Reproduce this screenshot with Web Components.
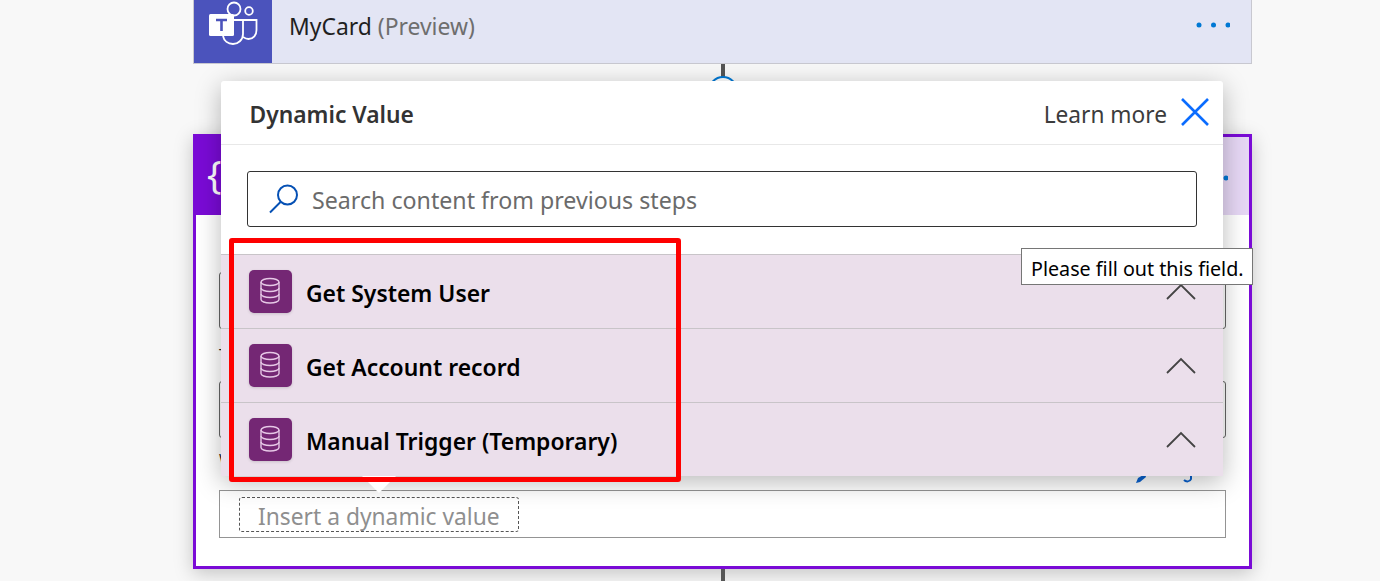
<!DOCTYPE html>
<html>
<head>
<meta charset="utf-8">
<title>MyCard</title>
<style>
html,body{ margin:0; height:581px; overflow:hidden; background:#f8f8f8; font-family:"Noto Sans","Open Sans",sans-serif; }
</style>
</head>
<body>
<flow-canvas>
  <teams-card title-text="MyCard" note="(Preview)"></teams-card>
  <flow-connector></flow-connector>
  <compose-card>
    <card-field label="T"></card-field>
    <card-field short></card-field>
    <value-field label="W" placeholder="Insert a dynamic value"></value-field>
  </compose-card>
  <flow-connector tail></flow-connector>
</flow-canvas>
<dynamic-panel>
  <step-row name="Get System User"></step-row>
  <step-row name="Get Account record"></step-row>
  <step-row name="Manual Trigger (Temporary)"></step-row>
</dynamic-panel>
<red-mark></red-mark>
<field-tip>Please fill out this field.</field-tip>

<script>
const dots = `<svg width="34" height="6" viewBox="0 0 34 6"><circle cx="3" cy="3" r="2.5" fill="#0078d4"/><circle cx="17.500" cy="3" r="2.5" fill="#0078d4"/><circle cx="32" cy="3" r="2.5" fill="#0078d4"/></svg>`;

customElements.define('teams-card', class extends HTMLElement {
  constructor(){ super(); this.attachShadow({mode:'open'});
    this.shadowRoot.innerHTML = `
    <style>
    :host{ display:flex; align-items:stretch; height:64px; box-sizing:border-box; background:#e3e5f4; border:1px solid #c8c8d0; border-top:0; }
    .icon{ width:78px; background:#4b53bc; display:flex; align-items:flex-start; justify-content:center; }
    h3{ margin:0 0 0 17px; font-size:22.900px; line-height:53px; font-weight:400; color:#1f1f1f; flex:1; white-space:nowrap; }
    span{ color:#6e6e6e; }
    .more{ margin:22px 21px 0 0; height:6px; line-height:0; }
    </style>
    <div class="icon">
      <svg width="64" height="54" viewBox="0 0 64 54" fill="none" stroke="#fff" stroke-width="1.8">
        <circle cx="33" cy="9" r="6.5"/>
        <circle cx="48" cy="11" r="3.8"/>
        <path d="M42 20h13.5v10c0 5-3 9-8 9-2.5 0-4-1-5.5-2"/>
        <path d="M30 20h12v14c0 6-5 10-10 10-5 0-9-3-10-8"/>
        <rect x="8" y="14" width="25" height="22" rx="1.5" fill="#fff" stroke="none"/>
        <path d="M15 20h11M20.500 20v11" stroke="#4b53bc" stroke-width="2.600"/>
      </svg>
    </div>
    <h3>${this.getAttribute('title-text')} <span>${this.getAttribute('note')}</span></h3>
    <div class="more">${dots}</div>`;
  }
});

customElements.define('flow-connector', class extends HTMLElement {
  constructor(){ super(); this.attachShadow({mode:'open'});
    const tail = this.hasAttribute('tail');
    this.shadowRoot.innerHTML = `
    <style>
    :host{ display:block; height:${tail ? 12 : 70}px; position:relative; }
    .line{ width:4px; height:${tail ? 12 : 14}px; background:#555; margin:0 auto; }
    .ring{ width:30px; height:30px; box-sizing:border-box; border:2px solid #0078d4; border-radius:50%; margin:-2px auto 0; background:#fff; }
    </style>
    <div class="line"></div>
    ${tail ? '' : '<div class="ring"></div>'}`;
  }
});

customElements.define('compose-card', class extends HTMLElement {
  constructor(){ super(); this.attachShadow({mode:'open'});
    this.shadowRoot.innerHTML = `
    <style>
    :host{ display:block; height:435px; box-sizing:border-box; background:#fff; border:3px solid #7a0bd6; box-shadow:0 4px 18px rgba(0,0,0,.22); }
    header{ display:flex; align-items:center; justify-content:space-between; height:78px; background:#e6d7f5; }
    .icon{ width:75px; height:78px; background:#7a0bd6; color:#fff; font:400 38px/72px "Noto Sans",sans-serif; padding-left:11px; box-sizing:border-box; }
    .more{ margin-right:21px; margin-top:4px; height:6px; line-height:0; }
    main{ padding:57px 23px 0; display:flex; flex-direction:column; }
    </style>
    <header><div class="icon">{x}</div><div class="more">${dots}</div></header>
    <main><slot></slot></main>`;
  }
});

customElements.define('card-field', class extends HTMLElement {
  constructor(){ super(); this.attachShadow({mode:'open'});
    const label = this.getAttribute('label');
    this.shadowRoot.innerHTML = `
    <style>
    :host{ display:block; height:109px; }
    :host([short]){ height:68px; }
    .box{ height:57px; box-sizing:border-box; border:1px solid #666; border-radius:3px; background:#fff; }
    label{ display:block; font-size:14px; line-height:20px; margin-top:15px; color:#222; }
    </style>
    <div class="box"></div>
    ${label ? `<label>${label}</label>` : ''}`;
  }
});

customElements.define('value-field', class extends HTMLElement {
  constructor(){ super(); this.attachShadow({mode:'open'});
    this.shadowRoot.innerHTML = `
    <style>
    :host{ display:block; }
    .top{ display:flex; justify-content:space-between; height:41px; padding-right:33px; font-size:14px; line-height:20px; color:#222; }
    .links{ display:flex; gap:36px; align-self:flex-end; padding-bottom:7px; line-height:0; }
    .box{ height:48px; box-sizing:border-box; border:1px solid #949494; background:#fff; padding:6px 19px; }
    .token{ display:inline-block; height:35px; line-height:37px; box-sizing:border-box; border:1px dashed #555; border-radius:3px; padding:0 18px; font-size:22.800px; color:#8f8f8f; white-space:nowrap; width:280px; }
    </style>
    <div class="top"><span>${this.getAttribute('label')}</span>
      <span class="links">
        <svg width="12" height="9" viewBox="0 0 12 9"><path d="M1 9l2-5 7-4 1 3-6 5z" fill="#0a62d0"/></svg>
        <svg width="10" height="9" viewBox="0 0 10 9" fill="none"><path d="M1 6c2 2 6 2 7-1V0" stroke="#0a62d0" stroke-width="2"/></svg>
      </span>
    </div>
    <div class="box"><span class="token">${this.getAttribute('placeholder')}</span></div>`;
  }
});

customElements.define('dynamic-panel', class extends HTMLElement {
  constructor(){ super(); this.attachShadow({mode:'open'});
    this.shadowRoot.innerHTML = `
    <style>
    :host{ display:block; position:absolute; left:221px; top:81px; width:1002px; background:#fff; border-radius:3px 3px 0 0; box-shadow:0 6px 26px rgba(0,0,0,.28); color:#333; }
    header{ display:flex; align-items:center; height:64px; box-sizing:border-box; padding:0 13px 0 28.500px; border-bottom:1px solid #e8e8e8; }
    h2{ margin:4px 0 0; font-size:22.800px; font-weight:600; flex:1; }
    .learn{ font-size:22.700px; color:#3c3c3c; margin:4px 13px 0 0; }
    header svg{ margin-top:-2px; }
    .search{ display:flex; align-items:center; margin:26px 26px 27px; height:56px; box-sizing:border-box; border:1px solid #333; border-radius:3px; padding-left:21px; }
    .search span{ font-size:23.200px; line-height:32px; margin-top:2px; color:#6b6b6b; margin-left:13px; }
    .beak{ position:absolute; left:141px; top:395px; width:0; height:0; border:17px solid transparent; border-top-color:#fff; border-bottom:0; }
    </style>
    <header>
      <h2>Dynamic Value</h2>
      <span class="learn">Learn more</span>
      <svg width="30" height="30" viewBox="0 0 30 30" stroke="#0a6cff" stroke-width="2.600" fill="none"><path d="M2 2l26 26M28 2L2 28"/></svg>
    </header>
    <div class="search">
      <svg width="30" height="30" viewBox="0 0 30 30" fill="none" stroke="#0550b4" stroke-width="2"><circle cx="18.500" cy="11" r="9.500"/><path d="M11.500 18L1 28.500"/></svg>
      <span>Search content from previous steps</span>
    </div>
    <slot></slot>
    <div class="beak"></div>`;
  }
});

customElements.define('step-row', class extends HTMLElement {
  constructor(){ super(); this.attachShadow({mode:'open'});
    this.shadowRoot.innerHTML = `
    <style>
    :host{ display:flex; align-items:center; height:74px; box-sizing:border-box; background:#ebdfeb; border-top:1px solid #c8c4c8; padding:0 27px 0 28px; }
    .icon{ width:43px; height:43px; border-radius:5px; background:#742774; display:flex; align-items:center; justify-content:center; box-shadow:0 1px 3px rgba(0,0,0,.15); }
    .icon svg{ margin:-2px 2px 0 0; }
    b{ flex:1; margin:4px 0 0 14px; font-size:22.900px; font-weight:600; color:#000; white-space:nowrap; }
    .up{ margin-top:-1px; }
    </style>
    <div class="icon">
      <svg width="20" height="27" viewBox="0 0 20 27" fill="none" stroke="#e6c8e6" stroke-width="1.400">
        <ellipse cx="10" cy="5" rx="9" ry="3.500"/>
        <path d="M1 5v17.500c0 2 4 3.500 9 3.500s9-1.500 9-3.500V5"/>
        <path d="M1 11c0 2 4 3.500 9 3.500s9-1.500 9-3.500"/>
        <path d="M1 17c0 2 4 3.500 9 3.500s9-1.500 9-3.500"/>
      </svg>
    </div>
    <b>${this.getAttribute('name')}</b>
    <svg class="up" width="30" height="17" viewBox="0 0 30 17" fill="none" stroke="#444" stroke-width="1.800"><path d="M1 16L15 2l14 14"/></svg>`;
  }
});

customElements.define('red-mark', class extends HTMLElement {
  constructor(){ super(); this.attachShadow({mode:'open'});
    this.shadowRoot.innerHTML = `
    <style>
    :host{ display:block; position:absolute; left:229px; top:238px; width:452px; height:244px; box-sizing:border-box; border:5px solid #fe0000; border-radius:3px; pointer-events:none; }
    </style>`;
  }
});

customElements.define('field-tip', class extends HTMLElement {
  constructor(){ super(); this.attachShadow({mode:'open'});
    this.shadowRoot.innerHTML = `
    <style>
    :host{ display:block; position:absolute; left:1021px; top:248px; width:232px; height:37px; box-sizing:border-box; border:1px solid #767676; background:#fff; color:#000; font-size:19.700px; line-height:39px; padding-left:9px; white-space:nowrap; }
    </style>
    <slot></slot>`;
  }
});

customElements.define('flow-canvas', class extends HTMLElement {
  constructor(){ super(); this.attachShadow({mode:'open'});
    this.shadowRoot.innerHTML = `
    <style>
    :host{ display:flex; flex-direction:column; width:1059px; margin-left:193px; }
    </style>
    <slot></slot>`;
  }
});
</script>
</body>
</html>
